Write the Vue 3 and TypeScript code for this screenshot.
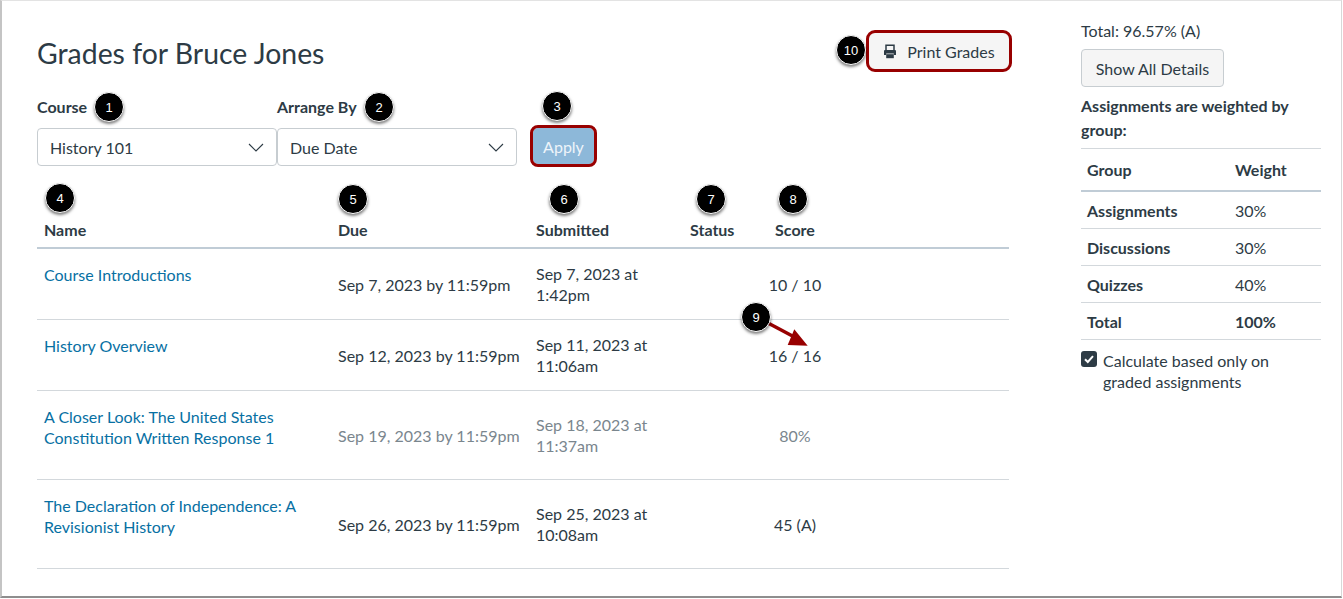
<script setup lang="ts">
interface Row {
  name: string[];
  due: string;
  submitted: string[];
  score: string;
  muted?: boolean;
  tall?: boolean;
}
interface Badge {
  n: number;
  x: number;
  y: number;
}
const rows: Row[] = [
  { name: ['Course Introductions'], due: 'Sep 7, 2023 by 11:59pm', submitted: ['Sep 7, 2023 at', '1:42pm'], score: '10 / 10' },
  { name: ['History Overview'], due: 'Sep 12, 2023 by 11:59pm', submitted: ['Sep 11, 2023 at', '11:06am'], score: '16 / 16' },
  { name: ['A Closer Look: The United States', 'Constitution Written Response 1'], due: 'Sep 19, 2023 by 11:59pm', submitted: ['Sep 18, 2023 at', '11:37am'], score: '80%', muted: true },
  { name: ['The Declaration of Independence: A', 'Revisionist History'], due: 'Sep 26, 2023 by 11:59pm', submitted: ['Sep 25, 2023 at', '10:08am'], score: '45 (A)' },
];
const weights = [
  { g: 'Assignments', w: '30%' },
  { g: 'Discussions', w: '30%' },
  { g: 'Quizzes', w: '40%' },
];
const badges: Badge[] = [
  { n: 1, x: 109, y: 107 },
  { n: 2, x: 379, y: 107 },
  { n: 3, x: 557, y: 106 },
  { n: 4, x: 60, y: 198 },
  { n: 5, x: 353, y: 199 },
  { n: 6, x: 564, y: 199 },
  { n: 7, x: 711, y: 199 },
  { n: 8, x: 793, y: 199 },
  { n: 9, x: 756, y: 317 },
  { n: 10, x: 851, y: 50 },
];
</script>

<template>
  <div class="frame">
    <div class="layout">
      <main class="main">
        <header class="head">
          <h1 class="title">Grades for Bruce Jones</h1>
          <button class="btn print" type="button">
            <svg class="printer" width="14" height="15" viewBox="0 0 14 15" aria-hidden="true">
              <path d="M3 6V1.2h8V6" fill="none" stroke="#2d3b45" stroke-width="1.5" />
              <path d="M1 7.2C1 6.5 1.5 6 2.2 6h9.6c.7 0 1.2.5 1.2 1.2V11h-2.2V9.4H3.200V11H1z" fill="#2d3b45" />
              <rect x="3.200" y="10.200" width="7.600" height="4" fill="#2d3b45" />
            </svg>
            Print Grades
          </button>
        </header>

        <div class="filters">
          <div class="field">
            <label class="label">Course</label>
            <div class="select">
              <span>History 101</span>
              <svg width="16" height="9" viewBox="0 0 16 9" aria-hidden="true"><path d="M1 1l7 7 7-7" fill="none" stroke="#2d3b45" stroke-width="1.100" /></svg>
            </div>
          </div>
          <div class="field">
            <label class="label">Arrange By</label>
            <div class="select">
              <span>Due Date</span>
              <svg width="16" height="9" viewBox="0 0 16 9" aria-hidden="true"><path d="M1 1l7 7 7-7" fill="none" stroke="#2d3b45" stroke-width="1.100" /></svg>
            </div>
          </div>
          <button class="btn apply" type="button">Apply</button>
        </div>

        <div class="grid-row thead">
          <div class="c-name">Name</div>
          <div>Due</div>
          <div>Submitted</div>
          <div>Status</div>
          <div class="c-score">Score</div>
        </div>
        <div v-for="r in rows" :key="r.due" class="grid-row tr" :class="{ muted: r.muted }">
          <div class="c-name link">
            <div v-for="l in r.name" :key="l">{{ l }}</div>
          </div>
          <div class="cell">{{ r.due }}</div>
          <div class="cell">
            <div v-for="l in r.submitted" :key="l">{{ l }}</div>
          </div>
          <div class="cell"></div>
          <div class="cell c-score">{{ r.score }}</div>
        </div>
      </main>

      <aside class="side">
        <div class="total">Total: 96.57% (A)</div>
        <button class="btn details" type="button">Show All Details</button>
        <div class="weighted">Assignments are weighted by<br />group:</div>
        <div class="w-row w-head"><span>Group</span><span>Weight</span></div>
        <div v-for="w in weights" :key="w.g" class="w-row"><b>{{ w.g }}</b><span>{{ w.w }}</span></div>
        <div class="w-row"><b>Total</b><b>100%</b></div>
        <div class="check">
          <span class="box">
            <svg width="12" height="12" viewBox="0 0 12 12" aria-hidden="true"><path d="M2 6.200l2.800 2.800L10 3.200" fill="none" stroke="#fff" stroke-width="2" /></svg>
          </span>
          <span>Calculate based only on<br />graded assignments</span>
        </div>
      </aside>
    </div>

    <svg class="arrow" width="60" height="40" viewBox="0 0 60 40" aria-hidden="true">
      <path d="M2 3L34 20" stroke="#980000" stroke-width="3.500" fill="none" />
      <path d="M41.700 25.700L28.300 9.300L21.700 25z" fill="#980000" />
    </svg>
    <div
      v-for="b in badges"
      :key="b.n"
      class="badge"
      :style="{ left: b.x - 15 + 'px', top: b.y - 15 + 'px' }"
    >{{ b.n }}</div>
  </div>
</template>

<style>
html, body { margin: 0; background: #fff; }
</style>

<style scoped>
.frame {
  position: relative;
  box-sizing: border-box;
  width: 1342px;
  height: 598px;
  background: #fff;
  border-top: 1px solid #e3e3e3;
  border-left: 2px solid #c4c4c4;
  border-right: 1px solid #d8d8d8;
  border-bottom: 2px solid #8e8e8e;
  font-family: Lato, sans-serif;
  font-size: 16px;
  line-height: 21px;
  color: #2d3b45;
  overflow: hidden;
}
.layout {
  display: flex;
  gap: 72px;
  padding-left: 35px;
}
.main { width: 972px; }
.head {
  display: flex;
  justify-content: space-between;
  align-items: center;
  margin-top: 32px;
  height: 36px;
}
.title {
  margin: 4px 0 0;
  font-size: 28.400px;
  font-weight: 400;
  line-height: 36px;
}
.btn {
  box-sizing: border-box;
  font: inherit;
  color: #2d3b45;
  background: #f5f5f5;
  border: 1px solid #c7cdd1;
  border-radius: 4px;
  padding: 0;
}
.print {
  width: 140px;
  height: 36px;
  margin-right: 0;
  display: flex;
  align-items: center;
  justify-content: center;
  gap: 10px;
  border: 0;
  outline: 3px solid #980000;
  border-radius: 6px;
}
.filters {
  display: flex;
  align-items: flex-start;
  margin-top: 27px;
}
.field { width: 240px; }
.label {
  display: block;
  font-weight: 700;
  margin-bottom: 11px;
}
.select {
  box-sizing: border-box;
  height: 38px;
  padding: 0 12px;
  display: flex;
  align-items: center;
  justify-content: space-between;
  background: #fff;
  border: 1px solid #c7cdd1;
  border-radius: 4px;
}
.apply {
  width: 61px;
  height: 36px;
  margin: 32px 0 0 16px;
  color: #eef4f9;
  background: #8db8d9;
  border: 0;
  outline: 3px solid #980000;
  border-radius: 5px;
}
.grid-row {
  display: grid;
  grid-template-columns: 294px 198px 154px 58px 108px 1fr;
}
.thead {
  box-sizing: border-box;
  height: 83px;
  padding-top: 53px;
  font-weight: 700;
  border-bottom: 2px solid #c0ccd6;
}
.thead > div:nth-child(3) { margin-left: 0; }
.c-name { padding-left: 7px; }
.c-score { text-align: center; }
.grid-row > div:nth-child(n+2):not(.c-score) { padding-left: 7px; }
.thead > div:nth-child(4) { padding-left: 7px; }
.tr {
  border-bottom: 1px solid #d3d8dc;
}
.link {
  align-self: start;
  padding-top: 15px;
  padding-bottom: 31px;
  color: #0770a3;
}
.cell {
  align-self: center;
  padding-top: 14px;
  padding-bottom: 14px;
}
.muted .cell { color: #7a868e; }
.side {
  width: 240px;
  padding-top: 19px;
}
.total { height: 21px; }
.details {
  display: block;
  width: 143px;
  height: 38px;
  margin-top: 8px;
}
.weighted {
  margin-top: 7px;
  padding-bottom: 6px;
  font-weight: 700;
  line-height: 24px;
  border-bottom: 1px solid #d3d8dc;
}
.w-row {
  box-sizing: border-box;
  height: 37px;
  display: grid;
  grid-template-columns: 148px 1fr;
  align-items: center;
  padding: 0 6px;
  border-bottom: 1px solid #d3d8dc;
}
.w-head {
  height: 43px;
  font-weight: 700;
  border-bottom: 2px solid #c0ccd6;
}
.check {
  display: flex;
  gap: 6px;
  margin-top: 10px;
}
.box {
  box-sizing: border-box;
  width: 16px;
  height: 16px;
  flex: none;
  display: flex;
  align-items: center;
  justify-content: center;
  background: #2d3b45;
  border-radius: 3px;
  margin-top: 1px;
}
.arrow {
  position: absolute;
  left: 764px;
  top: 319px;
}
.badge {
  position: absolute;
  box-sizing: border-box;
  width: 30px;
  height: 30px;
  display: flex;
  align-items: center;
  justify-content: center;
  border-radius: 50%;
  background: #000;
  border: 1px solid #fff;
  box-shadow: 0 2px 3px rgba(0, 0, 0, 0.5);
  color: #fff;
  font-family: "Liberation Sans", sans-serif;
  font-size: 13px;
  line-height: 1;
  margin-left: -2px;
  margin-top: -1px;
}
</style>
